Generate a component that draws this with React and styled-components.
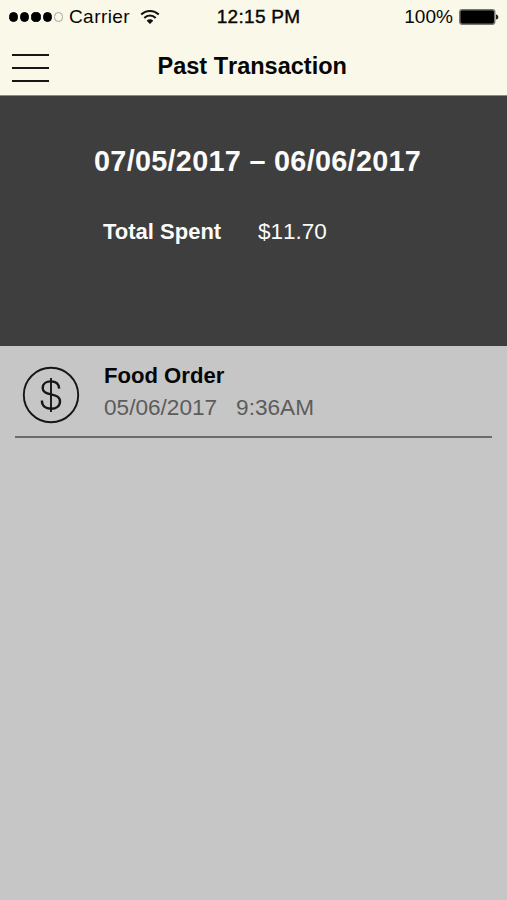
import React from "react";
import styled, { createGlobalStyle } from "styled-components";

const color = {
  cream: "#faf8e8",
  dark: "#3e3e3e",
  grey: "#c6c6c6",
  line: "#6b6b6b",
  muted: "#5c5c5c",
  white: "#fbfbfb",
  black: "#060606",
};

const GlobalStyle = createGlobalStyle`
  * {
    box-sizing: border-box;
    margin: 0;
    padding: 0;
  }

  body {
    font-family: "Liberation Sans", Helvetica, Arial, sans-serif;
    color: ${color.black};
    background-color: ${color.grey};
    font-kerning: none;
  }
`;

const Screen = styled.div`
  width: 100%;
  height: 100vh;
  display: flex;
  flex-flow: column nowrap;
  overflow: hidden;
`;

const Header = styled.header`
  flex: none;
  height: 96px;
  background-color: ${color.cream};
  border-bottom: 1px solid #8b8a82;
`;

const Status = styled.div`
  height: 34px;
  padding: 0 8px 0 9px;
  display: flex;
  align-items: center;
  line-height: 34px;
`;

const Signal = styled.div`
  display: flex;
  gap: 2px;
`;

const Dot = styled.span`
  width: 9.2px;
  height: 9.2px;
  border-radius: 50%;
  border: 1px solid ${(prop) => (prop.$filled ? "#000" : "#a5a49b")};
  background-color: ${(prop) => (prop.$filled ? "#000" : "transparent")};
`;

const Carrier = styled.span`
  margin-left: 6px;
  width: 71px;
  font-size: 19px;
  letter-spacing: 0.45px;
`;

const Wifi = styled.svg`
  width: 20px;
  height: 16px;
  fill: none;
  stroke: #111;
  stroke-width: 2.1;

  .tip {
    fill: #111;
    stroke: none;
  }
`;

const Clock = styled.span`
  margin-left: 57px;
  width: 188px;
  font-size: 19px;
  letter-spacing: 0.3px;
  -webkit-text-stroke: 0.4px ${color.black};
`;

const Percent = styled.span`
  width: 55px;
  font-size: 19px;
`;

const Battery = styled.svg`
  width: 40px;
  height: 17px;
`;

const Nav = styled.nav`
  height: 61px;
  padding-left: 12px;
  display: flex;
`;

const Menu = styled.button`
  width: 37px;
  height: 28px;
  margin-top: 20px;
  border: none;
  background: none;
  display: flex;
  flex-flow: column nowrap;
  justify-content: space-between;
`;

const MenuLine = styled.span`
  width: 100%;
  height: 2px;
  background-color: #161616;
`;

const Title = styled.h1`
  margin-left: 108.5px;
  font-size: 23.5px;
  font-weight: 700;
  line-height: 65px;
`;

const Summary = styled.section`
  flex: none;
  height: 250px;
  padding: 45px 0 0 94px;
  background-color: ${color.dark};
  color: ${color.white};
`;

const Period = styled.h2`
  font-size: 28.8px;
  line-height: 40px;
  letter-spacing: 0.3px;
  white-space: nowrap;
`;

const Total = styled.div`
  margin: 36px 0 0 9px;
  display: flex;
  font-size: 22.5px;
  line-height: 30px;
`;

const TotalLabel = styled.strong`
  width: 155px;
  font-size: 22px;
  font-kerning: normal;
`;

const List = styled.main`
  flex: 1;
  padding: 0 15px;
`;

const Row = styled.article`
  height: 92px;
  padding: 14px 0 0 7px;
  display: flex;
  border-bottom: 2px solid ${color.line};
`;

const Coin = styled.svg`
  flex: none;
  width: 58px;
  height: 58px;
  margin-top: 6px;
  fill: none;
  stroke: #161616;
  stroke-width: 1.9;

  .sign {
    stroke-width: 2.4;
  }
`;

const Details = styled.div`
  margin-left: 24px;
`;

const Name = styled.h3`
  font-size: 22.1px;
  line-height: 32px;
`;

const When = styled.p`
  display: flex;
  gap: 19px;
  font-size: 22.6px;
  line-height: 32px;
  color: ${color.muted};
`;

function StatusBar() {
  return (
    <Status>
      <Signal>
        <Dot $filled />
        <Dot $filled />
        <Dot $filled />
        <Dot $filled />
        <Dot />
      </Signal>
      <Carrier>Carrier</Carrier>
      <Wifi viewBox="0 0 20 16">
        <path d="M1.2 5.6a12.4 12.4 0 0 1 17.6 0" />
        <path d="M4.3 8.9a8 8 0 0 1 11.4 0" />
        <path className="tip" d="M6.7 11.7a4.7 4.7 0 0 1 6.6 0L10 15z" />
      </Wifi>
      <Clock>12:15 PM</Clock>
      <Percent>100%</Percent>
      <Battery viewBox="0 0 40 17">
        <rect x="0.8" y="0.8" width="35" height="14.4" rx="2.4" fill="#000" stroke="#77766e" strokeWidth="1.5" />
        <path d="M37 5.4c1.8.3 2.4 1.3 2.4 2.6s-.6 2.3-2.4 2.6z" fill="#222" />
      </Battery>
    </Status>
  );
}

function Transaction({ title, date, time }) {
  return (
    <Row>
      <Coin viewBox="0 0 58 58">
        <circle cx="29" cy="29" r="27.2" />
        <path d="M29 12v34" />
        <path
          className="sign"
          d="M37.2 22.6c-.3-4.6-3.300-7.200-8.300-7.200-4.900 0-8.200 2.500-8.200 6.500 0 4.200 3.300 5.300 8.300 6.400 5.600 1.200 9 2.600 9 7.300 0 4.500-3.700 7.200-9 7.200-5.600 0-9.100-3-9.100-8.200"
        />
      </Coin>
      <Details>
        <Name>{title}</Name>
        <When>
          <span>{date}</span>
          <span>{time}</span>
        </When>
      </Details>
    </Row>
  );
}

const transactions = [{ id: 1, title: "Food Order", date: "05/06/2017", time: "9:36AM" }];

function App() {
  return (
    <>
      <GlobalStyle />
      <Screen>
        <Header>
          <StatusBar />
          <Nav>
            <Menu aria-label="Menu">
              <MenuLine />
              <MenuLine />
              <MenuLine />
            </Menu>
            <Title>Past Transaction</Title>
          </Nav>
        </Header>
        <Summary>
          <Period>07/05/2017 – 06/06/2017</Period>
          <Total>
            <TotalLabel>Total Spent</TotalLabel>
            <span>$11.70</span>
          </Total>
        </Summary>
        <List>
          {transactions.map((item) => (
            <Transaction key={item.id} {...item} />
          ))}
        </List>
      </Screen>
    </>
  );
}

export default App;
